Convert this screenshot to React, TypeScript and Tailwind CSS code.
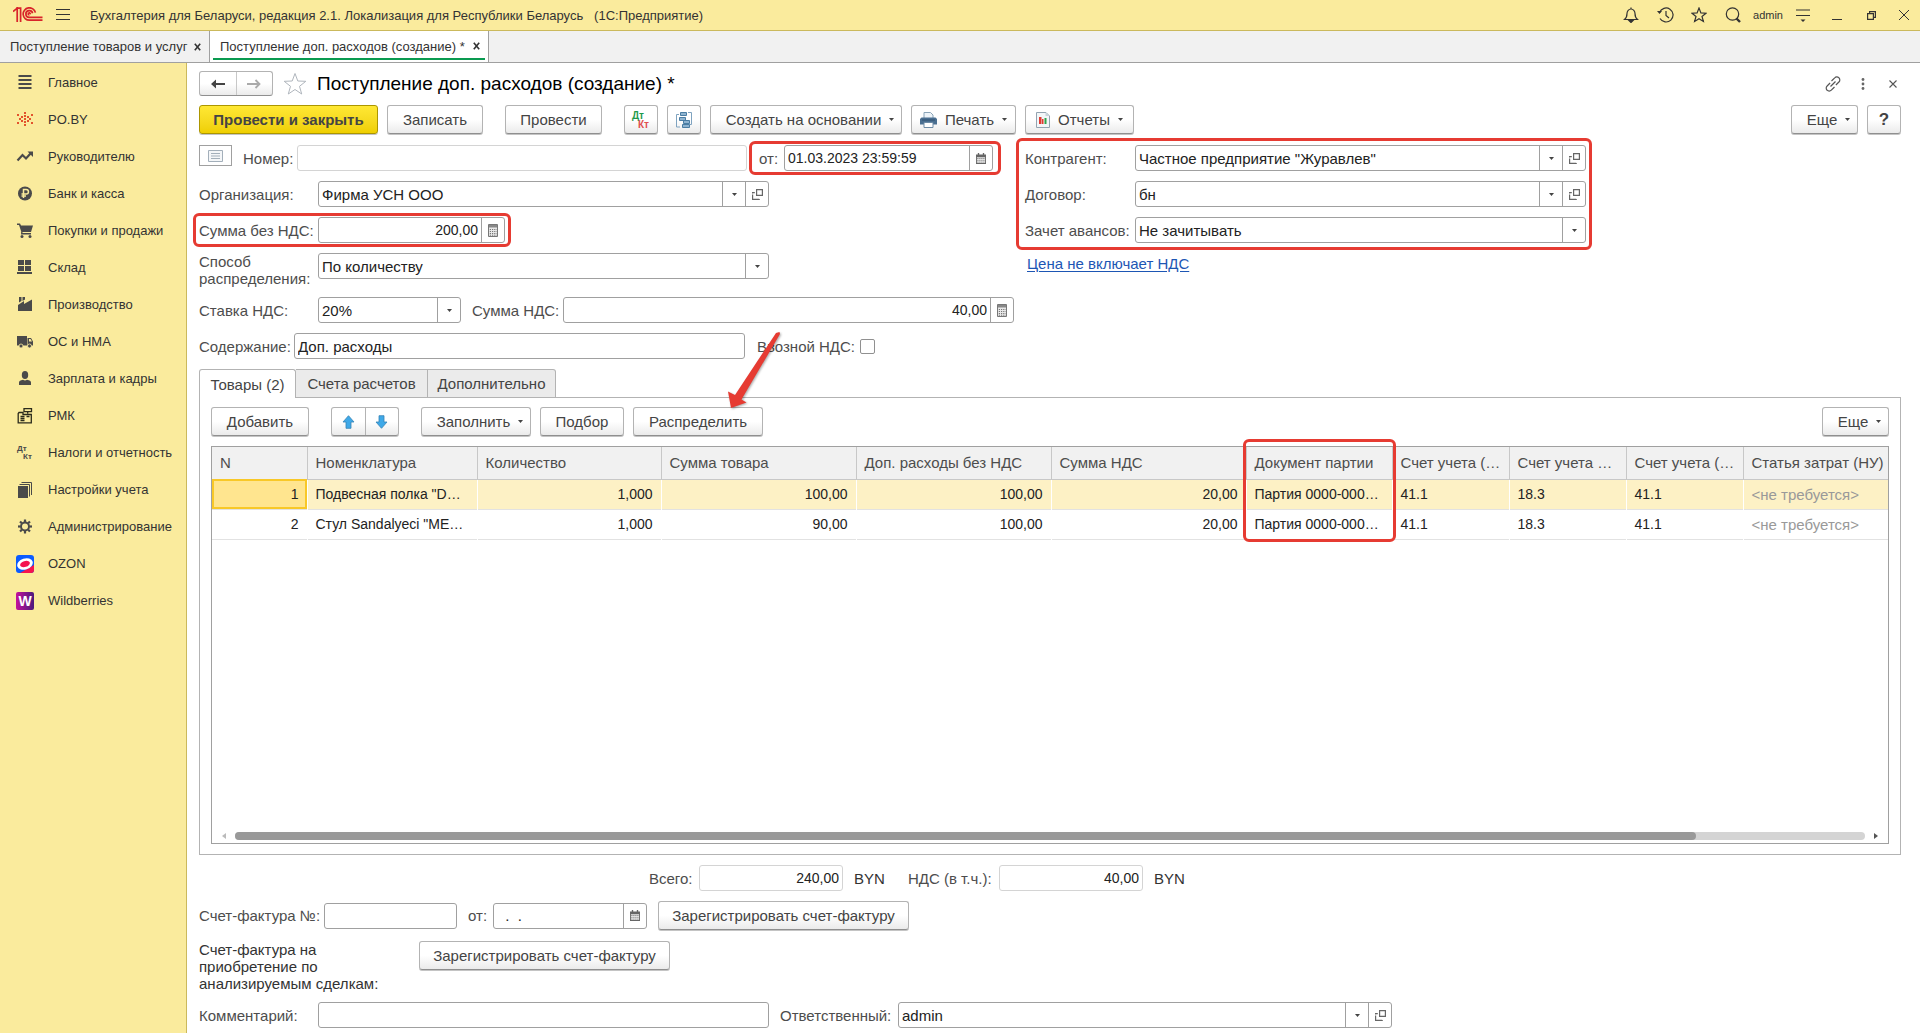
import { useState } from 'react';
import type { ReactNode } from 'react';
import clsx from 'clsx';

/* ---------- icons ---------- */

function LogoIcon() {
  return (
    <svg width="30" height="16" viewBox="0 0 30 16" fill="none" stroke="#d8232a" strokeWidth="1.7">
      <path d="M0 4.6 4.2 1.2V15" />
      <path d="M3.2 1.2H7.6V15" />
      <path d="M22.4 5.6A6.2 6.2 0 1 0 16.4 13.2H29.5" />
      <path d="M19.6 6.2A3.4 3.4 0 1 0 16.4 10.4H29.5" />
      <path d="M17.2 7.2A1 1 0 1 0 16.4 7.9" />
    </svg>
  );
}

function CaretIcon() {
  return (
    <svg width="5" height="3" viewBox="0 0 5 3" fill="#444">
      <path d="M0 0h5L2.5 3z" />
    </svg>
  );
}

function OpenIcon() {
  return (
    <svg width="11" height="11" viewBox="0 0 11 11" fill="none" stroke="#666" strokeWidth="1.2">
      <path d="M4.6.6h5.8v5.8H4.6z" />
      <path d="M2.8 3.6H.6v6.8h6.6V8.6" strokeDasharray="3 1 12" />
    </svg>
  );
}

function CalendarIcon() {
  return (
    <svg width="10" height="11" viewBox="0 0 11 12">
      <path d="M0 1.5h11V12H0z" fill="#666" />
      <path d="M2 0h1.5v2.5H2zM7.5 0H9v2.5H7.5z" fill="#666" />
      <path d="M1 4.5h9V11H1z" fill="#eee" />
      <path d="M1.5 6h8M1.5 8h8M1.5 10h8" stroke="#666" strokeDasharray="1.2 1" />
    </svg>
  );
}

function CalcIcon() {
  return (
    <svg width="10" height="13" viewBox="0 0 10 13">
      <path d="M.5.5h9v12h-9z" fill="#e8e8e8" stroke="#777" />
      <path d="M1 1h8v2.6H1z" fill="#888" />
      <path d="M1.8 5.5h7M1.8 7.5h7M1.8 9.5h7M1.8 11.2h7" stroke="#777" strokeDasharray="1.2 1" />
    </svg>
  );
}

function PostingsIcon() {
  return (
    <svg width="20" height="18" viewBox="0 0 20 18" fontFamily="Liberation Sans, sans-serif" fontWeight="bold">
      <text x="1" y="8" fontSize="10" fill="#1f9a4c">Дт</text>
      <text x="7" y="17" fontSize="10" fill="#e05050">Кт</text>
    </svg>
  );
}

function StructureIcon() {
  return (
    <svg width="18" height="18" viewBox="0 0 18 18" fill="none">
      <path d="M4 3.5H1.500v12.500H5M13 1.500h3.500v12H15" stroke="#7fa3c0" />
      <g fill="#8fb3cf" stroke="#4a7da3">
        <path d="M5.500 1.500h6v3h-6zM4.500 6.500h6v3h-6zM8.500 9.500h6v3h-6zM7.500 13.500h7v3h-7z" />
      </g>
    </svg>
  );
}

function PrinterIcon() {
  return (
    <svg width="17" height="16" viewBox="0 0 17 16">
      <path d="M4 .5h6.5L13 3v4H4z" fill="#eef4f9" stroke="#8aa4b8" />
      <path d="M1.5 5.500h14l1.500 1.500V12.500H0V7z" fill="#4a6f91" />
      <path d="M2 8h13" stroke="#2f5170" />
      <path d="M4 10.500h9v5H4z" fill="#fff" stroke="#6d8ba5" />
    </svg>
  );
}

function ReportIcon() {
  return (
    <svg width="14" height="16" viewBox="0 0 14 16">
      <path d="M.5.5h9.500L13.500 4v11.500H.5z" fill="#f3f6f8" stroke="#93a3b0" />
      <path d="M9.500.5V4h4z" fill="#c8d3db" />
      <path d="M3 5h2.500v7H3zM6 7h1.500v5H6z" fill="#e03b32" />
      <path d="M8.500 6h2v6h-2z" fill="#2da44a" />
    </svg>
  );
}

function ArrowIcon({ down }: { down?: boolean }) {
  return (
    <svg width="13" height="14" viewBox="0 0 13 14" className={down ? 'rotate-180' : ''}>
      <path d="M6.500.7 12 7H9v6.300H4V7H1z" fill="#3fa9e8" stroke="#3583b5" strokeWidth=".8" />
    </svg>
  );
}

const gearTeeth = [0, 45, 90, 135, 180, 225, 270, 315];

const sections: { title: string; icon: ReactNode }[] = [
  {
    title: 'Главное',
    icon: <path d="M2.500 2h13M2.500 6h13M2.500 10h13M2.500 14h13" stroke="#4a4a4a" strokeWidth="2" />,
  },
  {
    title: 'PO.BY',
    icon: (
      <path
        fill="#e2532d"
        d="M8 1h2v2H8zM8 4h2v2H8zM8 7h2v2H8zM8 10h2v2H8zM8 13h2v2H8zM5 5h2v2H5zM11 5h2v2h-2zM5 9h2v2H5zM11 9h2v2h-2zM1 3h2v2H1zM15 3h2v2h-2zM1 11h2v2H1zM15 11h2v2h-2zM3 7h2v2H3zM13 7h2v2h-2z"
      />
    ),
  },
  {
    title: 'Руководителю',
    icon: (
      <g fill="none" stroke="#4a4a4a" strokeWidth="2.200">
        <path d="M1.500 12.500 6.500 7l3.500 3.500L15 5" />
        <path d="M11.500 3.500H17V9z" fill="#4a4a4a" stroke="none" />
      </g>
    ),
  },
  {
    title: 'Банк и касса',
    icon: (
      <>
        <circle cx="9" cy="8.500" r="7" fill="#4a4a4a" />
        <path d="M7.500 13V4.500h2.700a2.200 2.200 0 0 1 0 4.500H5.500M5.500 11h4.500" fill="none" stroke="#faeb9d" strokeWidth="1.500" />
      </>
    ),
  },
  {
    title: 'Покупки и продажи',
    icon: (
      <g fill="#4a4a4a">
        <path d="M1 1.500h3l1 2h12L15 10H6.500v1H15v1.500H5L5.200 9.500 3 3H1z" />
        <circle cx="6" cy="14.500" r="1.500" />
        <circle cx="14" cy="14.500" r="1.500" />
      </g>
    ),
  },
  {
    title: 'Склад',
    icon: <path fill="#4a4a4a" d="M2 1h6v5H2zM9 1h6v5H9zM2 7h6v5H2zM9 7h6v5H9zM1 13h15v2H1z" />,
  },
  {
    title: 'Производство',
    icon: <path fill="#4a4a4a" d="M2 15V9l6-4v3l8-4.500V15zM3 1h2.500v4L3 6.500zM6.500 1H9v2.500L6.500 5z" />,
  },
  {
    title: 'ОС и НМА',
    icon: (
      <g>
        <path d="M1 3h10v9.500H1zM11.500 5H15l2 3.500v4h-5.500z" fill="#4a4a4a" />
        <path d="M13 6h1.500L16 8.500h-3z" fill="#faeb9d" />
        <circle cx="5" cy="13" r="2" fill="#4a4a4a" stroke="#faeb9d" strokeWidth=".8" />
        <circle cx="13.500" cy="13" r="2" fill="#4a4a4a" stroke="#faeb9d" strokeWidth=".8" />
      </g>
    ),
  },
  {
    title: 'Зарплата и кадры',
    icon: (
      <g fill="#4a4a4a">
        <ellipse cx="9" cy="5" rx="3.200" ry="4" />
        <path d="M3 15v-2.500Q3 10.500 7 9.800q2 1.500 4 0 4 .7 4 2.700V15z" />
      </g>
    ),
  },
  {
    title: 'РМК',
    icon: (
      <g fill="none" stroke="#2b2b1c" strokeWidth="1.300">
        <path d="M8 1.700h7.500v3H8zM11.700 4.700v2" />
        <path d="M3 5.500h4v2h8.300v8.300H2.200V6.500z" />
        <path d="M4.500 9.500h4M4.500 11.500h4M4.500 13.500h4M10.500 9.500h3" />
      </g>
    ),
  },
  {
    title: 'Налоги и отчетность',
    icon: (
      <g fontFamily="Liberation Sans, sans-serif" fontWeight="bold" fontSize="8" fill="#4a4a4a">
        <text x="1" y="7">Дт</text>
        <text x="7" y="15">Кт</text>
      </g>
    ),
  },
  {
    title: 'Настройки учета',
    icon: (
      <g>
        <path d="M2 5h10v12H2z" fill="#4a4a4a" />
        <path d="M3.500 3.500H13.500V15.500M5.500 1.500H15.500V14" fill="none" stroke="#4a4a4a" />
      </g>
    ),
  },
  {
    title: 'Администрирование',
    icon: (
      <g stroke="#4a4a4a" fill="none">
        <circle cx="9" cy="8.500" r="4" strokeWidth="2" />
        {gearTeeth.map((a) => (
          <path key={a} d="M9 1.500V4" strokeWidth="2.200" transform={`rotate(${a} 9 8.500)`} />
        ))}
      </g>
    ),
  },
  {
    title: 'OZON',
    icon: (
      <g>
        <rect width="18" height="18" rx="3" fill="#0a5bff" />
        <path d="M4 18 18 10v5a3 3 0 0 1-3 3z" fill="#f5134f" />
        <ellipse cx="9" cy="9" rx="8" ry="5.500" fill="#fff" transform="rotate(-18 9 9)" />
        <ellipse cx="9" cy="9" rx="5" ry="3" fill="#f5134f" transform="rotate(-18 9 9)" />
      </g>
    ),
  },
  {
    title: 'Wildberries',
    icon: (
      <g>
        <defs>
          <linearGradient id="wb" x1="0" x2="1">
            <stop offset="0" stopColor="#c4119b" />
            <stop offset="1" stopColor="#4b1a7c" />
          </linearGradient>
        </defs>
        <rect width="18" height="18" rx="2" fill="url(#wb)" />
        <text x="9" y="14" textAnchor="middle" fontSize="14" fontWeight="bold" fill="#fff" fontFamily="Liberation Sans, sans-serif">
          W
        </text>
      </g>
    ),
  },
];

/* ---------- controls ---------- */

function Button({ children, className }: { children: ReactNode; className?: string }) {
  return (
    <button
      type="button"
      className={clsx(
        'flex h-[29px] shrink-0 items-center justify-center rounded-[3px] border border-[#b3b3b3] border-b-[#8f8f8f] bg-linear-to-b from-white from-50% to-[#ebebeb] whitespace-nowrap text-[#444] shadow-[0_1px_0_#c4c4c4]',
        className,
      )}
    >
      {children}
    </button>
  );
}

function Label({ htmlFor, children, className }: { htmlFor: string; children: ReactNode; className?: string }) {
  return (
    <label htmlFor={htmlFor} className={clsx('shrink-0 whitespace-nowrap text-[#4d4d4d]', className)}>
      {children}
    </label>
  );
}

const box = 'flex h-[26px] shrink-0 overflow-hidden rounded-[3px] border bg-white';
const addon = 'flex w-[23px] shrink-0 items-center justify-center border-l border-[#a0a0a0]';

type FieldProps = {
  id: string;
  value?: string;
  className?: string;
  numeric?: boolean;
  right?: boolean;
  pale?: boolean;
  icon?: ReactNode;
  iconLabel?: string;
};

function Field({ id, value = '', className, numeric, right, pale, icon, iconLabel }: FieldProps) {
  return (
    <div className={clsx(box, pale ? 'border-[#d4d4d4]' : 'border-[#a0a0a0]', className)}>
      <input
        id={id}
        defaultValue={value}
        readOnly={pale}
        className={clsx(
          'w-full min-w-0 flex-1 px-[3px] text-[#222] outline-none',
          (numeric || right) && 'text-[14px]',
          right && 'text-right',
        )}
      />
      {icon && (
        <button type="button" aria-label={iconLabel} className={addon}>
          {icon}
        </button>
      )}
    </div>
  );
}

function Combo({ id, value, className, open }: { id: string; value: string; className?: string; open?: boolean }) {
  return (
    <div className={clsx(box, 'border-[#a0a0a0]', className)}>
      <div className="relative flex flex-1">
        <select id={id} className="w-full appearance-none pr-7 pl-[3px] text-[#222] outline-none">
          <option>{value}</option>
        </select>
        <span className={clsx(addon, 'pointer-events-none absolute inset-y-0 right-0')}>
          <CaretIcon />
        </span>
      </div>
      {open && (
        <button type="button" aria-label="Открыть" className={addon}>
          <OpenIcon />
        </button>
      )}
    </div>
  );
}

function Highlight({ className }: { className: string }) {
  return <span className={clsx('pointer-events-none absolute rounded-md border-3 border-[#e63b32]', className)} />;
}

/* ---------- window parts ---------- */

function TitleBar() {
  const btn = 'flex h-full w-[34px] items-center justify-center';
  return (
    <header className="flex h-[31px] shrink-0 items-center border-b border-[#cbb95c] bg-[#faeb9d] text-[#333]">
      <div className="ml-[13px]">
        <LogoIcon />
      </div>
      <button type="button" aria-label="Главное меню" className="ml-[13px]">
        <svg width="14" height="12" viewBox="0 0 14 12" stroke="#333">
          <path d="M0 .5h14M0 5.500h14M0 10.500h14" />
        </svg>
      </button>
      <span className="ml-5 flex-1 text-[13px] whitespace-pre">
        {'Бухгалтерия для Беларуси, редакция 2.1. Локализация для Республики Беларусь   (1С:Предприятие)'}
      </span>
      <button type="button" aria-label="Уведомления" className={btn}>
        <svg width="16" height="16" viewBox="0 0 16 16" fill="none" stroke="#333" strokeWidth="1.200">
          <path d="M8 .5v1.500M1.500 12.500h13Q12 10.500 12 6.500a4 4.500 0 0 0-8 0q0 4-2.500 6z" />
          <path d="M6 13.500h4L8 15.500z" fill="#333" />
        </svg>
      </button>
      <button type="button" aria-label="История" className={btn}>
        <svg width="17" height="16" viewBox="0 0 17 16" fill="none" stroke="#333" strokeWidth="1.200">
          <path d="M2.500 5.500A7 7 0 1 1 3 11.500M9 4v4.500l3 2.500" />
          <path d="M0 4h5L2.500 7z" fill="#333" stroke="none" />
        </svg>
      </button>
      <button type="button" aria-label="Избранное" className={btn}>
        <svg width="16" height="16" viewBox="0 0 16 16" fill="none" stroke="#333" strokeWidth="1.200">
          <path d="m8 1 1.900 4.900 5.100.3-4 3.300 1.400 5L8 11.700l-4.400 2.800 1.400-5-4-3.300 5.100-.3z" />
        </svg>
      </button>
      <button type="button" aria-label="Поиск" className={btn}>
        <svg width="16" height="16" viewBox="0 0 16 16" fill="none" stroke="#333">
          <circle cx="7.500" cy="7" r="6.200" strokeWidth="1.200" />
          <path d="m11.500 11.500 3.500 3.500" strokeWidth="2.400" />
        </svg>
      </button>
      <a href="#user" className="w-9 text-center text-[11px]">
        admin
      </a>
      <button type="button" aria-label="Сервис" className={btn}>
        <svg width="14" height="13" viewBox="0 0 14 13" stroke="#333" strokeWidth="1.200">
          <path d="M0 1h14M0 6.500h14" />
          <path d="M4.500 10.500h5L7 13z" fill="#333" stroke="none" />
        </svg>
      </button>
      <button type="button" aria-label="Свернуть" className={btn}>
        <svg width="10" height="10" viewBox="0 0 10 10" stroke="#333">
          <path d="M0 9.500h10" />
        </svg>
      </button>
      <button type="button" aria-label="Восстановить" className={btn}>
        <svg width="9" height="9" viewBox="0 0 9 9" fill="none" stroke="#333" strokeWidth="1.200">
          <path d="M.6 2.600h5.800v5.800H.6zM2.600 2.600v-2h5.800v5.800h-2" />
        </svg>
      </button>
      <button type="button" aria-label="Закрыть программу" className="flex h-full w-8 items-center justify-center">
        <svg width="10" height="10" viewBox="0 0 10 10" stroke="#333">
          <path d="m0 0 10 10M10 0 0 10" />
        </svg>
      </button>
    </header>
  );
}

function CloseX() {
  return (
    <button type="button" aria-label="Закрыть" className="flex items-center">
      <svg width="7" height="8" viewBox="0 0 7 8" stroke="#333" strokeWidth="1.600">
        <path d="m.8.8 5.400 6.400M6.200.8.8 7.200" />
      </svg>
    </button>
  );
}

function WindowTabs() {
  return (
    <nav className="flex h-8 shrink-0 border-b border-[#a0a0a0] bg-[#f1f1f1] text-[13px] text-[#333]">
      <div className="flex w-[210px] items-center justify-between border-r border-[#a0a0a0] pr-2 pl-2.5 whitespace-nowrap">
        <a href="#receipts">Поступление товаров и услуг</a>
        <CloseX />
      </div>
      <div className="flex w-[279px] flex-col border-r border-[#a0a0a0] bg-white px-[3px]">
        <div className="flex flex-1 items-center justify-between pt-[3px] pr-[5px] pl-[7px] whitespace-nowrap">
          <a href="#extra-costs">Поступление доп. расходов (создание) *</a>
          <CloseX />
        </div>
        <div className="mb-0.5 h-0.5 bg-[#0a9a50]" />
      </div>
    </nav>
  );
}

function Sidebar() {
  return (
    <aside className="w-[187px] shrink-0 border-r border-[#cbb95c] bg-[#faeb9d] pt-px">
      <ul>
        {sections.map((s) => (
          <li key={s.title}>
            <a href="#section" className="flex h-[37px] items-center gap-3.5 pl-4 text-[13px] whitespace-nowrap text-[#333]">
              <svg width="18" height="18" viewBox="0 0 18 18">
                {s.icon}
              </svg>
              {s.title}
            </a>
          </li>
        ))}
      </ul>
    </aside>
  );
}

function FormHeader() {
  return (
    <div className="flex h-[25px] items-center">
      <div className="flex h-[25px] w-[74px] rounded-[3px] border border-[#b3b3b3] border-b-[#8f8f8f] bg-linear-to-b from-white from-50% to-[#ebebeb]">
        <button type="button" aria-label="Назад" className="flex flex-1 items-center justify-center border-r border-[#c8c8c8]">
          <svg width="14" height="10" viewBox="0 0 14 10" fill="#444">
            <path d="M14 4v2H5v3.500L0 5 5 .5V4z" />
          </svg>
        </button>
        <button type="button" aria-label="Вперед" className="flex flex-1 items-center justify-center">
          <svg width="14" height="10" viewBox="0 0 14 10" fill="none" stroke="#aaa" strokeWidth="1.800">
            <path d="M0 5h12.500M8.500 1l4 4-4 4" />
          </svg>
        </button>
      </div>
      <button type="button" aria-label="В избранное" className="ml-2.5">
        <svg width="24" height="23" viewBox="0 0 24 23" fill="none" stroke="#b0b6bd">
          <path d="m12 1.500 2.800 7.500 8 .3-6.300 5 2.200 7.700L12 17.500 5.300 22l2.200-7.700-6.300-5 8-.3z" />
        </svg>
      </button>
      <h1 className="ml-2.5 flex-1 text-[19px] text-black">Поступление доп. расходов (создание) *</h1>
      <button type="button" aria-label="Ссылка">
        <svg width="16" height="16" viewBox="0 0 16 16" fill="none" stroke="#555" strokeWidth="1.200">
          <path d="M6.500 5 9.700 1.800a2.900 2.900 0 0 1 4.200 0 2.900 2.900 0 0 1 0 4.200l-3 3" />
          <path d="M9.500 11 6.300 14.200a2.900 2.900 0 0 1-4.200 0 2.900 2.900 0 0 1 0-4.200l3-3" />
          <path d="m5.500 10.500 5-5" />
        </svg>
      </button>
      <button type="button" aria-label="Действия" className="ml-5">
        <svg width="4" height="12" viewBox="0 0 4 12" fill="#666">
          <circle cx="2" cy="1.500" r="1.400" />
          <circle cx="2" cy="6" r="1.400" />
          <circle cx="2" cy="10.500" r="1.400" />
        </svg>
      </button>
      <button type="button" aria-label="Закрыть форму" className="mr-1 ml-6">
        <svg width="8" height="8" viewBox="0 0 8 8" stroke="#555" strokeWidth="1.100">
          <path d="m.5.5 7 7M7.500.5l-7 7" />
        </svg>
      </button>
    </div>
  );
}

function CommandBar() {
  return (
    <div className="mt-[9px] flex gap-[9px]">
      <button
        type="button"
        className="h-[29px] w-[179px] rounded-[3px] border border-[#ac9600] bg-linear-to-b from-[#ffe833] to-[#efcf00] font-bold text-[#444] shadow-[0_1px_0_#c4c4c4]"
      >
        Провести и закрыть
      </button>
      <Button className="w-24">Записать</Button>
      <Button className="ml-[13px] w-[97px]">Провести</Button>
      <Button className="ml-[13px] w-[34px]">
        <PostingsIcon />
      </Button>
      <Button className="w-[34px]">
        <StructureIcon />
      </Button>
      <Button className="w-48 gap-2 pl-2">
        Создать на основании <CaretIcon />
      </Button>
      <Button className="w-[105px] gap-2">
        <PrinterIcon />
        <span>Печать</span>
        <CaretIcon />
      </Button>
      <Button className="w-[109px] gap-2">
        <ReportIcon />
        <span>Отчеты</span>
        <CaretIcon />
      </Button>
      <Button className="ml-auto w-[67px] gap-2 pl-2">
        Еще <CaretIcon />
      </Button>
      <Button className="w-[34px] text-[17px] font-bold">?</Button>
    </div>
  );
}

function DocumentFields() {
  return (
    <div className="mt-[11px] flex">
      <div className="flex w-[826px] shrink-0 flex-col gap-2.5">
        <div className="flex items-center">
          <button
            type="button"
            aria-label="Состояние"
            className="flex h-[21px] w-[33px] items-center justify-center self-start border border-[#a0a0a0]"
          >
            <svg width="15" height="12" viewBox="0 0 15 12" fill="#f4f6f8" stroke="#a3afba">
              <path d="M.5.5h14v11H.5z" />
              <path d="M3 3.500h9M3 6h9M3 8.500h9" />
            </svg>
          </button>
          <Label htmlFor="number" className="ml-[11px] w-[54px]">
            Номер:
          </Label>
          <Field id="number" pale className="w-[450px]" />
          <div className="relative ml-3 flex items-center">
            <Label htmlFor="date" className="w-[25px]">
              от:
            </Label>
            <Field
              id="date"
              value="01.03.2023 23:59:59"
              numeric
              className="w-[209px]"
              icon={<CalendarIcon />}
              iconLabel="Выбрать дату"
            />
            <Highlight className="-inset-y-1 -right-2 -left-2.5" />
          </div>
        </div>
        <div className="flex items-center">
          <Label htmlFor="org" className="w-[119px]">
            Организация:
          </Label>
          <Combo id="org" value="Фирма УСН ООО" open className="w-[451px]" />
        </div>
        <div className="relative flex w-[306px] items-center">
          <Label htmlFor="sum" className="w-[119px]">
            Сумма без НДС:
          </Label>
          <Field id="sum" value="200,00" right className="w-[187px]" icon={<CalcIcon />} iconLabel="Калькулятор" />
          <Highlight className="-inset-x-1.5 -inset-y-1" />
        </div>
        <div className="flex items-start">
          <Label htmlFor="method" className="w-[119px] leading-[17px]">
            Способ
            <br />
            распределения:
          </Label>
          <Combo id="method" value="По количеству" className="w-[451px]" />
        </div>
        <div className="flex items-center">
          <Label htmlFor="rate" className="w-[119px]">
            Ставка НДС:
          </Label>
          <Combo id="rate" value="20%" className="w-[143px]" />
          <Label htmlFor="vat" className="ml-[11px] w-[91px]">
            Сумма НДС:
          </Label>
          <Field id="vat" value="40,00" right className="w-[451px]" icon={<CalcIcon />} iconLabel="Калькулятор" />
        </div>
        <div className="flex items-center">
          <Label htmlFor="content" className="w-[95px]">
            Содержание:
          </Label>
          <Field id="content" value="Доп. расходы" className="w-[451px]" />
          <Label htmlFor="import-vat" className="ml-3 w-[103px]">
            Ввозной НДС:
          </Label>
          <input id="import-vat" type="checkbox" className="h-[15px] w-[15px] appearance-none rounded-[2px] border border-[#909090] bg-white" />
        </div>
      </div>
      <div>
        <div className="relative flex flex-col gap-2.5">
          <div className="flex items-center">
            <Label htmlFor="partner" className="w-[110px]">
              Контрагент:
            </Label>
            <Combo id="partner" value={'Частное предприятие "Журавлев"'} open className="w-[451px]" />
          </div>
          <div className="flex items-center">
            <Label htmlFor="contract" className="w-[110px]">
              Договор:
            </Label>
            <Combo id="contract" value="бн" open className="w-[451px]" />
          </div>
          <div className="flex items-center">
            <Label htmlFor="advance" className="w-[110px]">
              Зачет авансов:
            </Label>
            <Combo id="advance" value="Не зачитывать" className="w-[451px]" />
          </div>
          <Highlight className="-inset-y-[7px] -right-1.5 -left-[9px]" />
        </div>
        <a href="#price" className="mt-3 ml-0.5 inline-block text-[#1d56b4] underline underline-offset-2">
          Цена не включает НДС
        </a>
      </div>
    </div>
  );
}

const columns = [
  { id: 'n', title: 'N', width: 'w-[95px]', right: true },
  { id: 'item', title: 'Номенклатура', width: 'w-[170px]' },
  { id: 'qty', title: 'Количество', width: 'w-[184px]', right: true },
  { id: 'sum', title: 'Сумма товара', width: 'w-[195px]', right: true },
  { id: 'extra', title: 'Доп. расходы без НДС', width: 'w-[195px]', right: true },
  { id: 'vat', title: 'Сумма НДС', width: 'w-[195px]', right: true },
  { id: 'batch', title: 'Документ партии', width: 'w-[146px]', marked: true },
  { id: 'acc', title: 'Счет учета (…', width: 'w-[117px]' },
  { id: 'accVat', title: 'Счет учета …', width: 'w-[117px]' },
  { id: 'accTax', title: 'Счет учета (…', width: 'w-[117px]' },
  { id: 'cost', title: 'Статья затрат (НУ)', width: '' },
];

const rows = [
  ['1', 'Подвесная полка "D…', '1,000', '100,00', '100,00', '20,00', 'Партия 0000-000…', '41.1', '18.3', '41.1', '<не требуется>'],
  ['2', 'Стул Sandalyeci "ME…', '1,000', '90,00', '100,00', '20,00', 'Партия 0000-000…', '41.1', '18.3', '41.1', '<не требуется>'],
];

// how much of the full table width fits in the view
const visibleWidth = 1676;
const fullWidth = 1870;

function GoodsTable() {
  const [selected, setSelected] = useState(0);
  return (
    <div className="mt-2.5 flex flex-1 flex-col border border-[#a0a0a0]">
      <table className="w-full table-fixed border-collapse text-[14px] text-[#222]">
        <thead>
          <tr className="h-8 bg-[#f1f1f1] text-left text-[15px] text-[#4d4d4d]">
            {columns.map((c) => (
              <th
                key={c.id}
                className={clsx(
                  'relative border-r border-b border-[#c8c8c8] pr-1 pl-2 font-normal whitespace-nowrap last:border-r-0',
                  c.width,
                )}
              >
                {c.title}
                {c.marked && <Highlight className="-inset-x-1 -top-2 h-[103px]" />}
              </th>
            ))}
          </tr>
        </thead>
        <tbody>
          {rows.map((row, r) => (
            <tr
              key={row[0]}
              onClick={() => setSelected(r)}
              className={clsx('h-[30px] border-b border-[#e2e2e2]', r === selected && 'bg-[#fdf1c5]')}
            >
              {row.map((cell, i) => (
                <td
                  key={columns[i].id}
                  className={clsx(
                    'border-r border-white px-2 whitespace-nowrap last:border-r-0',
                    columns[i].right && 'text-right',
                    columns[i].id === 'cost' && 'text-[15px] text-[#999]',
                    i === 0 && r === selected && 'bg-[#ffe58f] outline-2 -outline-offset-2 outline-[#f8c828]',
                  )}
                >
                  {cell}
                </td>
              ))}
            </tr>
          ))}
        </tbody>
      </table>
      <div className="mt-auto mb-[3px] flex h-2 items-center gap-[9px] px-2.5">
        <svg width="4" height="6" viewBox="0 0 4 6" fill="#bbb">
          <path d="M4 0v6L0 3z" />
        </svg>
        <div className="h-2 flex-1 rounded-full bg-[#d4d4d4]">
          <div className="h-2 rounded-full bg-[#999]" style={{ width: `${(visibleWidth / fullWidth) * 100}%` }} />
        </div>
        <svg width="4" height="6" viewBox="0 0 4 6" fill="#555">
          <path d="M0 0v6l4-3z" />
        </svg>
      </div>
    </div>
  );
}

function GoodsPanel() {
  return (
    <section className="mt-2.5 flex flex-1 flex-col">
      <div role="tablist" className="relative z-10 -mb-px flex h-[29px] text-[#444]">
        <button type="button" role="tab" aria-selected="true" className="w-[97px] rounded-t-[3px] border border-b-0 border-[#b3b3b3] bg-white">
          Товары (2)
        </button>
        <button type="button" role="tab" className="w-[132px] border border-l-0 border-[#b3b3b3] bg-[#ebebeb]">
          Счета расчетов
        </button>
        <button type="button" role="tab" className="w-32 rounded-tr-[3px] border border-l-0 border-[#b3b3b3] bg-[#ebebeb]">
          Дополнительно
        </button>
      </div>
      <div className="flex flex-1 flex-col border border-[#b3b3b3] px-[11px] pt-[9px] pb-2.5">
        <div className="flex gap-[9px]">
          <Button className="w-[98px]">Добавить</Button>
          <div className="ml-[13px] flex h-[29px] w-[68px] rounded-[3px] border border-[#b3b3b3] border-b-[#8f8f8f] bg-linear-to-b from-white from-50% to-[#ebebeb] shadow-[0_1px_0_#c4c4c4]">
            <button type="button" aria-label="Вверх" className="flex flex-1 items-center justify-center border-r border-[#b3b3b3]">
              <ArrowIcon />
            </button>
            <button type="button" aria-label="Вниз" className="flex flex-1 items-center justify-center">
              <ArrowIcon down />
            </button>
          </div>
          <Button className="ml-[13px] w-[110px] gap-2 pl-2">
            Заполнить <CaretIcon />
          </Button>
          <Button className="w-[84px]">Подбор</Button>
          <div className="relative">
            <Button className="w-[130px]">Распределить</Button>
            <svg className="pointer-events-none absolute bottom-[27px] left-[93px] z-20 drop-shadow-[1px_1px_1px_#0005]" width="56" height="78" viewBox="0 0 56 78">
              <path d="M5 77 2 60.500 9 64 50 2 53.500 1 54 3 15.500 68.500l5 3z" fill="#e63b32" />
            </svg>
          </div>
          <Button className="ml-auto w-[67px] gap-2 pl-2">
            Еще <CaretIcon />
          </Button>
        </div>
        <GoodsTable />
      </div>
    </section>
  );
}

function Footer() {
  return (
    <div className="mt-2.5 flex flex-col gap-2.5">
      <div className="flex items-center pl-[450px] text-[#333]">
        <Label htmlFor="total" className="w-[50px]">
          Всего:
        </Label>
        <Field id="total" value="240,00" right pale className="w-36" />
        <span className="ml-[11px] w-[54px]">BYN</span>
        <Label htmlFor="total-vat" className="w-[91px]">
          НДС (в т.ч.):
        </Label>
        <Field id="total-vat" value="40,00" right pale className="w-36" />
        <span className="ml-[11px]">BYN</span>
      </div>
      <div className="flex items-center">
        <Label htmlFor="invoice" className="w-[125px]">
          Счет-фактура №:
        </Label>
        <Field id="invoice" className="w-[133px]" />
        <Label htmlFor="invoice-date" className="ml-[11px] w-[25px]">
          от:
        </Label>
        <Field id="invoice-date" value="  .  ." className="w-[154px]" icon={<CalendarIcon />} iconLabel="Выбрать дату" />
        <Button className="ml-[11px] w-[251px]">Зарегистрировать счет-фактуру</Button>
      </div>
      <div className="flex items-start pt-px">
        <p className="w-[220px] leading-[17px] text-[#333]">
          Счет-фактура на
          <br />
          приобретение по
          <br />
          анализируемым сделкам:
        </p>
        <Button className="w-[251px]">Зарегистрировать счет-фактуру</Button>
      </div>
      <div className="flex items-center">
        <Label htmlFor="comment" className="w-[119px]">
          Комментарий:
        </Label>
        <Field id="comment" className="w-[451px]" />
        <Label htmlFor="responsible" className="ml-[11px] w-[118px]">
          Ответственный:
        </Label>
        <Combo id="responsible" value="admin" open className="w-[494px]" />
      </div>
    </div>
  );
}

export default function App() {
  return (
    <div className="flex min-h-screen flex-col bg-white font-['Liberation_Sans',Arial,sans-serif] text-[15px] leading-[17px]">
      <TitleBar />
      <WindowTabs />
      <div className="flex flex-1">
        <Sidebar />
        <main className="flex min-w-0 flex-1 flex-col pt-2 pr-[19px] pb-[5px] pl-3">
          <FormHeader />
          <CommandBar />
          <DocumentFields />
          <GoodsPanel />
          <Footer />
        </main>
      </div>
    </div>
  );
}
